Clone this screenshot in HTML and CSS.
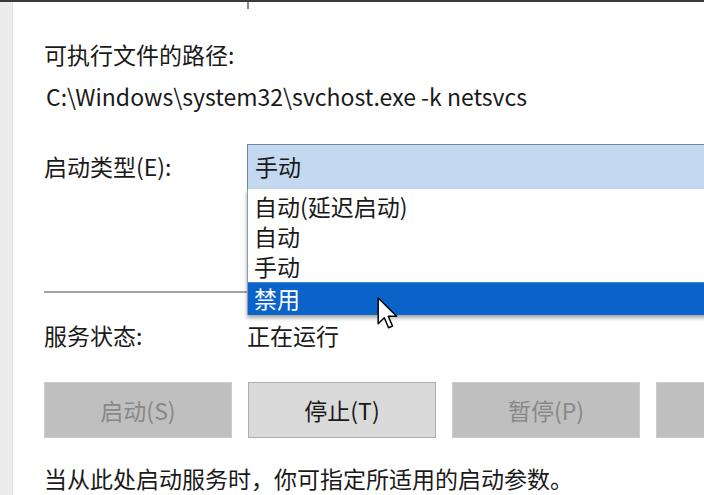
FILE: index.html
```html
<!DOCTYPE html>
<html lang="zh-CN">
<head>
<meta charset="utf-8">
<title>服务属性</title>
<link rel="stylesheet" href="styles.css">
</head>
<body>
<div class="topbar"></div>
<div class="main">
  <div class="sidebar"></div>
  <div class="content">
    <div class="tick"></div>
    <div class="label path-label">可执行文件的路径:</div>
    <div class="label path">C:\Windows\system32\svchost.exe -k netsvcs</div>
    <div class="row startup">
      <div class="label col1">启动类型(E):</div>
      <div class="combo">
        <div class="combo-value">手动</div>
        <ul class="combo-list">
          <li>自动(延迟启动)</li>
          <li>自动</li>
          <li>手动</li>
          <li class="hl">禁用</li>
        </ul>
        <svg class="cursor" width="21" height="33" viewBox="0 0 12.5 20">
          <path d="M0.6 0.6 L0.6 16.2 L4.3 12.6 L6.9 18.6 L9.3 17.6 L6.7 11.7 L11.8 11.7 Z" fill="#fff" stroke="#000" stroke-width="0.9" stroke-linejoin="round"/>
        </svg>
      </div>
    </div>
    <div class="separator"></div>
    <div class="row status">
      <div class="label col1">服务状态:</div>
      <div class="label">正在运行</div>
    </div>
    <div class="buttons">
      <div class="btn disabled">启动(S)</div>
      <div class="btn">停止(T)</div>
      <div class="btn disabled">暂停(P)</div>
      <div class="btn disabled"></div>
    </div>
    <div class="label hint">当从此处启动服务时，你可指定所适用的启动参数。</div>
  </div>
</div>
</body>
</html>
```
FILE: styles.css
```css
html, body {
  margin: 0;
  padding: 0;
  background: #ffffff;
  overflow: hidden;
  width: 704px;
  height: 495px;
}
body {
  font-family: "Noto Sans CJK SC", "Noto Sans", sans-serif;
  font-size: 23px;
  color: #1a1a1a;
}
.topbar {
  height: 2px;
  background: #3a3a3a;
}
.main {
  display: flex;
  height: 493px;
}
.sidebar {
  width: 12px;
  flex: none;
  background: #ececec;
  border-right: 1px solid #e2e2e2;
}
.content {
  flex: 1;
  padding-left: 31px;
  display: flex;
  flex-direction: column;
  min-width: 0;
}
.tick {
  margin-left: 203px;
  width: 2px;
  height: 7px;
  background: #8c8c8c;
}
.label {
  line-height: 30px;
  white-space: nowrap;
}
.path-label {
  margin-top: 30px;
}
.path {
  margin-top: 12px;
  margin-left: 2px;
}
.row {
  display: flex;
  align-items: center;
}
.col1 {
  width: 203px;
  flex: none;
}
.startup {
  margin-top: 33px;
  height: 45px;
}
.startup .col1 {
  margin-top: -2px;
}
.combo {
  position: relative;
  flex: 1;
  height: 45px;
  margin-right: -20px;
  z-index: 2;
}
.combo-value {
  box-sizing: border-box;
  height: 46px;
  background: #c4d9ef;
  border: 1px solid #6f859c;
  border-right: none;
  padding-left: 7px;
  line-height: 42px;
}
.combo-list {
  position: absolute;
  top: 45px;
  left: 0;
  right: 0;
  margin: 0;
  padding: 3px 0 0;
  list-style: none;
  background: #ffffff;
  border-left: 1px solid #8a9bb0;
  box-shadow: 0 3px 4px rgba(0, 0, 0, 0.35);
}
.combo-list li {
  height: 30px;
  line-height: 29px;
  padding-left: 6px;
  white-space: nowrap;
}
.combo-list li.hl {
  background: #0a63c9;
  color: #ffffff;
  height: 32px;
  line-height: 31px;
  border-top: 1px solid #3f86d6;
}
.cursor {
  position: absolute;
  left: 130px;
  top: 153px;
}
.separator {
  margin-top: 102px;
  height: 2px;
  background: #a3a3a3;
  margin-right: 40px;
}
.status {
  margin-top: 27px;
}
.buttons {
  display: flex;
  gap: 16px;
  margin-top: 32px;
}
.btn {
  flex: none;
  box-sizing: border-box;
  width: 188px;
  height: 56px;
  background: #dadada;
  border: 1px solid #adadad;
  display: flex;
  align-items: center;
  justify-content: center;
  color: #1a1a1a;
}
.btn.disabled {
  background: #bfbfbf;
  border-color: #cbcbcb;
  color: #888888;
}
.hint {
  margin-top: 25px;
}
```
